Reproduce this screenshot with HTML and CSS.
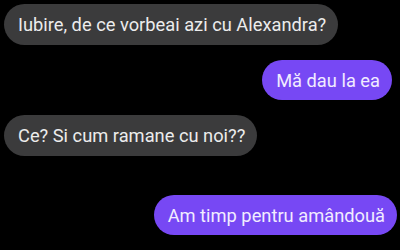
FILE: index.html
```html
<!DOCTYPE html>
<html lang="ro">
<head>
    <meta charset="UTF-8">
    <meta name="viewport" content="width=device-width, initial-scale=1.0">
    <title>Conversație</title>
    <link rel="stylesheet" href="styles.css">
</head>
<body>
    <div class="chat">
        <div class="bubble received first">Iubire, de ce vorbeai azi cu Alexandra?</div>
        <div class="bubble sent narrow">Mă dau la ea</div>
        <div class="bubble received">Ce? Si cum ramane cu noi??</div>
        <div class="bubble sent last">Am timp pentru amândouă</div>
    </div>
</body>
</html>
```

FILE: styles.css
```css
* {
    margin: 0;
    padding: 0;
    box-sizing: border-box;
}

body {
    background: #000;
    font-family: 'Roboto', 'Liberation Sans', sans-serif;
    width: 400px;
    height: 250px;
    overflow: hidden;
}

.chat {
    display: flex;
    flex-direction: column;
    padding: 4px 3px 0 4px;
}

.bubble {
    height: 41px;
    display: flex;
    align-items: center;
    padding: 0 12px 0 14px;
    border-radius: 21px;
    font-size: 18.3px;
    white-space: nowrap;
    margin-bottom: 15px;
}

.received {
    align-self: flex-start;
    background: #3b3b3c;
    color: #ececec;
}

.sent {
    align-self: flex-end;
    background: #7748f4;
    color: #f1ecff;
    height: 40px;
}

.narrow {
    margin-right: 5px;
}

.last {
    margin-top: 24px;
}
```
